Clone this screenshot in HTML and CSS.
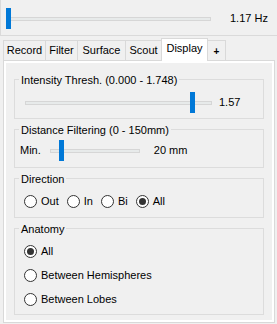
FILE: index.html
```html
<!DOCTYPE html>
<html>
<head>
<meta charset="utf-8">
<link rel="stylesheet" href="styles.css">
</head>
<body>
<div class="top">
  <div class="slider s-top"><div class="track"></div><div class="thumb" style="left:0px"></div></div>
  <span class="val v-top">1.17 Hz</span>
</div>
<div class="tabs">
  <div class="tab t-record">Record</div>
  <div class="tab t-filter">Filter</div>
  <div class="tab t-surface">Surface</div>
  <div class="tab t-scout">Scout</div>
  <div class="tab sel t-display">Display</div>
  <div class="tab t-plus">+</div>
</div>
<div class="page">
  <div class="inner">
    <fieldset class="grp">
      <legend>Intensity Thresh. (0.000 - 1.748)</legend>
      <div class="row r1">
        <div class="slider s-int"><div class="track"></div><div class="thumb" style="left:165px"></div></div>
        <span class="val v-int">1.57</span>
      </div>
    </fieldset>
    <fieldset class="grp">
      <legend>Distance Filtering (0 - 150mm)</legend>
      <div class="row r2">
        <span>Min.</span>
        <div class="slider s-dist"><div class="track"></div><div class="thumb" style="left:9px"></div></div>
        <span class="val v-dist">20 mm</span>
      </div>
    </fieldset>
    <fieldset class="grp">
      <legend>Direction</legend>
      <div class="row r3">
        <label class="radio"><span class="circle"></span><span>Out</span></label>
        <label class="radio"><span class="circle"></span><span>In</span></label>
        <label class="radio"><span class="circle"></span><span>Bi</span></label>
        <label class="radio"><span class="circle on"></span><span>All</span></label>
      </div>
    </fieldset>
    <fieldset class="grp">
      <legend>Anatomy</legend>
      <div class="col r4">
        <label class="radio"><span class="circle on"></span><span>All</span></label>
        <label class="radio"><span class="circle"></span><span>Between Hemispheres</span></label>
        <label class="radio"><span class="circle"></span><span>Between Lobes</span></label>
      </div>
    </fieldset>
  </div>
</div>
</body>
</html>
```
FILE: styles.css
```css
html, body {
  margin: 0;
  padding: 0;
}
body {
  width: 277px;
  height: 324px;
  overflow: hidden;
  background: #f0f0f0;
  color: #000;
  font-family: "Liberation Sans", Arial, sans-serif;
  font-size: 11px;
  line-height: 13px;
}
.top {
  box-sizing: border-box;
  height: 36px;
  padding: 2px 0 0 5px;
  border-left: 1px solid #dadada;
  border-bottom: 1px solid #dadada;
  display: flex;
  align-items: center;
}
.slider {
  position: relative;
  height: 21px;
  display: flex;
  align-items: center;
  flex: none;
}
.track {
  flex: 1;
  box-sizing: border-box;
  height: 4px;
  border: 1px solid #d6d6d6;
  background: #e7eaea;
}
.thumb {
  position: absolute;
  top: 0;
  width: 5px;
  height: 21px;
  background: #0078d7;
}
.s-top { width: 205px; }
.v-top { margin-left: 19px; }

.tabs {
  display: flex;
  align-items: flex-end;
  height: 24px;
  padding-left: 3px;
}
.tab {
  box-sizing: border-box;
  height: 20px;
  border: 1px solid #d9d9d9;
  border-bottom: none;
  margin-right: -1px;
  background: #f0f0f0;
  display: flex;
  align-items: center;
  justify-content: center;
  white-space: nowrap;
}
.tab.sel {
  position: relative;
  z-index: 1;
  height: 23px;
  margin-bottom: -1px;
  padding-bottom: 3px;
  background: #fff;
}
.t-record { width: 43px; }
.t-filter { width: 33px; }
.t-surface { width: 49px; }
.t-scout { width: 37px; }
.t-display { width: 47px; }
.t-plus { width: 19px; font-weight: bold; font-size: 10px; padding-top: 2px; }

.page {
  box-sizing: border-box;
  margin-left: 3px;
  width: 272px;
  height: 263px;
  border: 1px solid #d9d9d9;
  background: #fff;
  padding: 2px;
}
.inner {
  box-sizing: border-box;
  height: 100%;
  background: #f0f0f0;
  padding: 9px 8px 0;
  display: flex;
  flex-direction: column;
  gap: 3px;
}
.grp {
  margin: 0;
  padding: 0;
  min-width: 0;
  border: 1px solid #dcdcdc;
}
.grp legend {
  padding: 2px 2px 0;
  margin-left: 4px;
  line-height: 13px;
}
.row {
  display: flex;
  align-items: center;
}
.r1 { padding: 5px 0 5px 10px; height: 21px; }
.s-int { width: 187px; }
.v-int { margin-left: 7px; }
.r2 { padding: 3px 0 6px 5px; height: 21px; }
.s-dist { width: 90px; margin-left: 9px; }
.v-dist { margin-left: 14px; }
.r3 { padding: 7px 0 7px 9px; height: 17px; gap: 8px; }
.col {
  display: flex;
  flex-direction: column;
  gap: 7px;
}
.r4 { padding: 7px 0 6px 9px; }
.radio {
  display: flex;
  align-items: center;
  gap: 4px;
  height: 17px;
}
.circle {
  box-sizing: border-box;
  width: 13px;
  height: 13px;
  border: 1px solid #333;
  border-radius: 50%;
  background: #fff;
  display: flex;
  align-items: center;
  justify-content: center;
  flex: none;
}
.circle.on::after {
  content: "";
  width: 7px;
  height: 7px;
  border-radius: 50%;
  background: #333;
}
```
